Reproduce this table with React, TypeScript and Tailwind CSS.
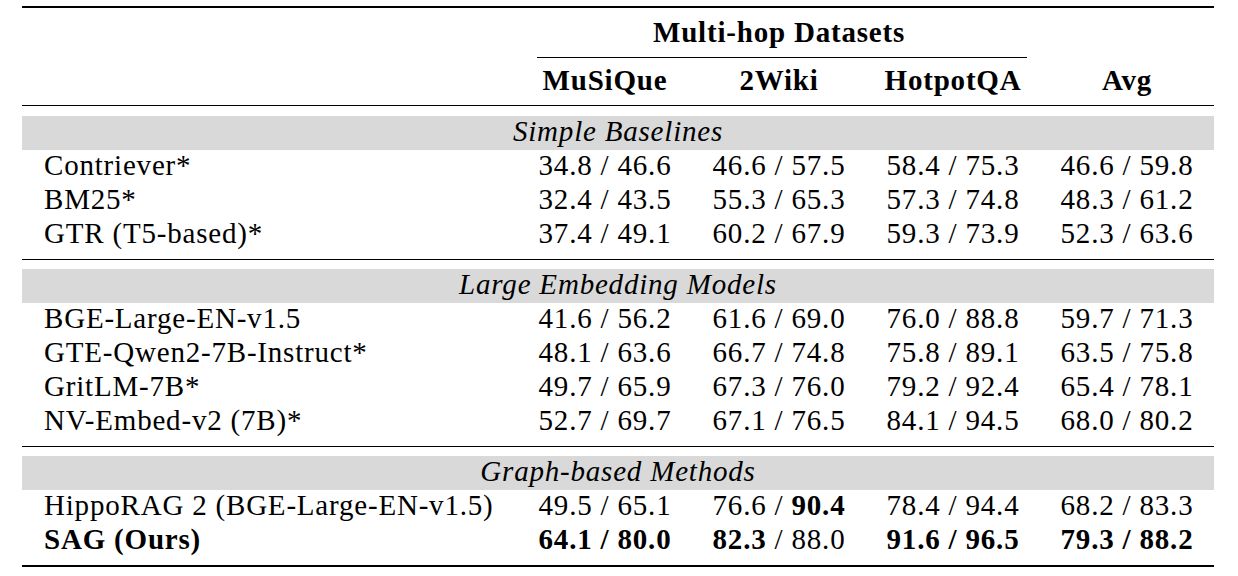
const sections = [
  {
    title: "Simple Baselines",
    rows: [
      { name: "Contriever*", cells: [["34.8", "46.6"], ["46.6", "57.5"], ["58.4", "75.3"], ["46.6", "59.8"]] },
      { name: "BM25*", cells: [["32.4", "43.5"], ["55.3", "65.3"], ["57.3", "74.8"], ["48.3", "61.2"]] },
      { name: "GTR (T5-based)*", cells: [["37.4", "49.1"], ["60.2", "67.9"], ["59.3", "73.9"], ["52.3", "63.6"]] },
    ],
  },
  {
    title: "Large Embedding Models",
    rows: [
      { name: "BGE-Large-EN-v1.5", cells: [["41.6", "56.2"], ["61.6", "69.0"], ["76.0", "88.8"], ["59.7", "71.3"]] },
      { name: "GTE-Qwen2-7B-Instruct*", cells: [["48.1", "63.6"], ["66.7", "74.8"], ["75.8", "89.1"], ["63.5", "75.8"]] },
      { name: "GritLM-7B*", cells: [["49.7", "65.9"], ["67.3", "76.0"], ["79.2", "92.4"], ["65.4", "78.1"]] },
      { name: "NV-Embed-v2 (7B)*", cells: [["52.7", "69.7"], ["67.1", "76.5"], ["84.1", "94.5"], ["68.0", "80.2"]] },
    ],
  },
  {
    title: "Graph-based Methods",
    rows: [
      {
        name: "HippoRAG 2 (BGE-Large-EN-v1.5)",
        cells: [["49.5", "65.1"], ["76.6", "*90.4"], ["78.4", "94.4"], ["68.2", "83.3"]],
      },
      {
        name: "*SAG (Ours)",
        cells: [["*64.1", "*80.0"], ["*82.3", "88.0"], ["*91.6", "*96.5"], ["*79.3", "*88.2"]],
      },
    ],
  },
];

// leading "*" marks a bold value
function Val({ v }: { v: string }) {
  if (v.startsWith("*")) return <span className="font-bold">{v.slice(1)}</span>;
  return <span>{v}</span>;
}

function Cell({ pair }: { pair: string[] }) {
  const bothBold = pair[0].startsWith("*") && pair[1].startsWith("*");
  return (
    <div className="text-center">
      <Val v={pair[0]} />
      <span className={bothBold ? "font-bold" : ""}> / </span>
      <Val v={pair[1]} />
    </div>
  );
}

const cols = "grid grid-cols-[496px_174px_174px_174px_174px]";

export default function App() {
  return (
    <div className="h-[576px] w-[1238px] bg-white pt-[6px] font-['Liberation_Serif',serif] text-[29px] tracking-[0.8px] text-black">
      <div className="ml-[22px] w-[1192px]">
        <div className="h-[2px] bg-black" />

        {/* header */}
        <div className="pb-[10px] pt-[9px] pl-[496px] font-bold leading-[30px]">
          <div className="w-[522px] text-center">Multi-hop Datasets</div>
        </div>
        <div className="ml-[515px] h-px w-[490px] bg-black" />
        <div className={`${cols} pb-[10px] pt-[7px] font-bold leading-[30px]`}>
          <div />
          <div className="text-center">MuSiQue</div>
          <div className="text-center">2Wiki</div>
          <div className="text-center">HotpotQA</div>
          <div className="text-center">Avg</div>
        </div>
        <div className="h-px bg-black" />

        {sections.map((s, i) => (
          <div key={s.title}>
            {i > 0 && <div className="mt-[7px] h-px bg-black" />}
            <div className={`${i > 0 ? "mt-[9px]" : "mt-[10px]"} h-[34px] bg-[#d9d9d9] text-center italic leading-[30px]`}>
              {s.title}
            </div>
            {s.rows.map((r) => (
              <div key={r.name} className={`${cols} h-[34px] leading-[30px]`}>
                <div className="pl-[22px]">
                  <Val v={r.name} />
                </div>
                {r.cells.map((c, j) => (
                  <Cell key={j} pair={c} />
                ))}
              </div>
            ))}
          </div>
        ))}
        <div className="mt-[7px] h-[2px] bg-black" />
      </div>
    </div>
  );
}
